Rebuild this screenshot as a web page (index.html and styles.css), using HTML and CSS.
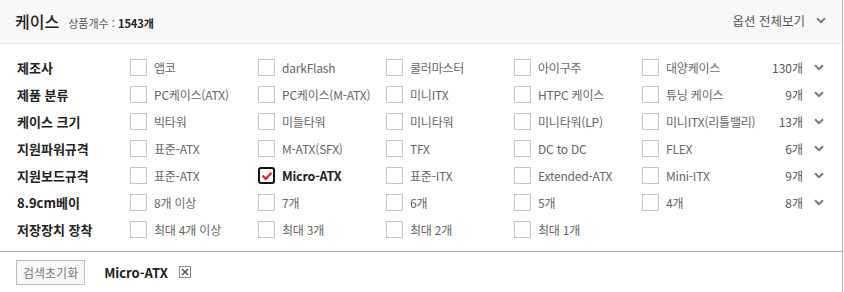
FILE: index.html
```html
<!DOCTYPE html>
<html lang="ko">
<head>
  <meta charset="UTF-8">
  <title>케이스 옵션</title>
  <link rel="stylesheet" href="styles.css">
</head>
<body>
  <div class="panel">
    <header class="panel-head">
      <div class="title">
        <h2>케이스</h2>
        <span class="total">상품개수 : <b>1543개</b></span>
      </div>
      <button class="view-all">옵션 전체보기
        <svg class="chev" width="10" height="7" viewBox="0 0 10 7"><path d="M1 1.2 L5 5.2 L9 1.2" fill="none" stroke="#777" stroke-width="2"/></svg>
      </button>
    </header>

    <div class="spec-list">
      <div class="spec-row">
        <div class="spec-name">제조사</div>
        <label class="opt"><span class="box"></span>앱코</label>
        <label class="opt"><span class="box"></span>darkFlash</label>
        <label class="opt"><span class="box"></span>쿨러마스터</label>
        <label class="opt"><span class="box"></span>아이구주</label>
        <label class="opt"><span class="box"></span>대양케이스</label>
        <div class="count">130개</div>
        <svg class="more" width="10" height="7" viewBox="0 0 10 7"><path d="M1 1.2 L5 5.2 L9 1.2" fill="none" stroke="#777" stroke-width="2"/></svg>
      </div>
      <div class="spec-row">
        <div class="spec-name">제품 분류</div>
        <label class="opt"><span class="box"></span>PC케이스(ATX)</label>
        <label class="opt"><span class="box"></span>PC케이스(M-ATX)</label>
        <label class="opt"><span class="box"></span>미니ITX</label>
        <label class="opt"><span class="box"></span>HTPC 케이스</label>
        <label class="opt"><span class="box"></span>튜닝 케이스</label>
        <div class="count">9개</div>
        <svg class="more" width="10" height="7" viewBox="0 0 10 7"><path d="M1 1.2 L5 5.2 L9 1.2" fill="none" stroke="#777" stroke-width="2"/></svg>
      </div>
      <div class="spec-row">
        <div class="spec-name">케이스 크기</div>
        <label class="opt"><span class="box"></span>빅타워</label>
        <label class="opt"><span class="box"></span>미들타워</label>
        <label class="opt"><span class="box"></span>미니타워</label>
        <label class="opt"><span class="box"></span>미니타워(LP)</label>
        <label class="opt"><span class="box"></span>미니ITX(리틀밸리)</label>
        <div class="count">13개</div>
        <svg class="more" width="10" height="7" viewBox="0 0 10 7"><path d="M1 1.2 L5 5.2 L9 1.2" fill="none" stroke="#777" stroke-width="2"/></svg>
      </div>
      <div class="spec-row">
        <div class="spec-name">지원파워규격</div>
        <label class="opt"><span class="box"></span>표준-ATX</label>
        <label class="opt"><span class="box"></span>M-ATX(SFX)</label>
        <label class="opt"><span class="box"></span>TFX</label>
        <label class="opt"><span class="box"></span>DC to DC</label>
        <label class="opt"><span class="box"></span>FLEX</label>
        <div class="count">6개</div>
        <svg class="more" width="10" height="7" viewBox="0 0 10 7"><path d="M1 1.2 L5 5.2 L9 1.2" fill="none" stroke="#777" stroke-width="2"/></svg>
      </div>
      <div class="spec-row">
        <div class="spec-name">지원보드규격</div>
        <label class="opt"><span class="box"></span>표준-ATX</label>
        <label class="opt checked"><span class="box">
          <svg width="12" height="10" viewBox="0 0 12 10"><path d="M1.5 4.5 L4.8 7.8 L10.5 1.8" fill="none" stroke="#e2282e" stroke-width="2.2"/></svg>
        </span>Micro-ATX</label>
        <label class="opt"><span class="box"></span>표준-ITX</label>
        <label class="opt"><span class="box"></span>Extended-ATX</label>
        <label class="opt"><span class="box"></span>Mini-ITX</label>
        <div class="count">9개</div>
        <svg class="more" width="10" height="7" viewBox="0 0 10 7"><path d="M1 1.2 L5 5.2 L9 1.2" fill="none" stroke="#777" stroke-width="2"/></svg>
      </div>
      <div class="spec-row">
        <div class="spec-name">8.9cm베이</div>
        <label class="opt"><span class="box"></span>8개 이상</label>
        <label class="opt"><span class="box"></span>7개</label>
        <label class="opt"><span class="box"></span>6개</label>
        <label class="opt"><span class="box"></span>5개</label>
        <label class="opt"><span class="box"></span>4개</label>
        <div class="count">8개</div>
        <svg class="more" width="10" height="7" viewBox="0 0 10 7"><path d="M1 1.2 L5 5.2 L9 1.2" fill="none" stroke="#777" stroke-width="2"/></svg>
      </div>
      <div class="spec-row">
        <div class="spec-name">저장장치 장착</div>
        <label class="opt"><span class="box"></span>최대 4개 이상</label>
        <label class="opt"><span class="box"></span>최대 3개</label>
        <label class="opt"><span class="box"></span>최대 2개</label>
        <label class="opt"><span class="box"></span>최대 1개</label>
      </div>
    </div>

    <footer class="panel-foot">
      <button class="reset">검색초기화</button>
      <span class="chosen">Micro-ATX</span>
      <button class="remove">
        <svg width="12" height="12" viewBox="0 0 12 12"><rect x="0.5" y="0.5" width="11" height="11" fill="#fff" stroke="#888"/><path d="M3 3 L9 9 M9 3 L3 9" stroke="#444" stroke-width="1.3"/></svg>
      </button>
    </footer>
  </div>
</body>
</html>
```

FILE: styles.css
```css
* { box-sizing: border-box; }
body {
  margin: 0;
  font-family: "Noto Sans CJK KR", "Noto Sans", sans-serif;
  background: #fff;
  color: #222;
}
.panel {
  width: 843px;
  height: 292px;
  border-right: 1px solid #b5b5b5;
}
.panel-head {
  height: 44px;
  background: #f8f8f8;
  border-bottom: 1px solid #e0e0e0;
  display: flex;
  align-items: center;
  justify-content: space-between;
  padding: 0 16px 2px 15px;
}
.title {
  display: flex;
  align-items: baseline;
  gap: 9px;
}
.title h2 {
  margin: 0;
  font-size: 16px;
  font-weight: 500;
  color: #222;
  line-height: 20px;
}
.total {
  font-size: 11px;
  color: #555;
}
.total b { color: #222; font-weight: 700; }
.view-all {
  background: none;
  border: none;
  padding: 0;
  font: inherit;
  font-size: 12.5px;
  color: #555;
  display: flex;
  align-items: center;
  gap: 11px;
  cursor: pointer;
}
.spec-list {
  padding: 10px 0 8px;
}
.spec-row {
  display: grid;
  grid-template-columns: 130px repeat(5, 128px) 33px 10px;
  align-items: center;
  height: 27px;
  column-gap: 0;
}
.spec-name {
  padding-left: 17px;
  font-size: 13px;
  font-weight: 700;
  color: #222;
}
.opt {
  display: flex;
  align-items: center;
  gap: 7px;
  font-size: 12px;
  color: #666;
  white-space: nowrap;
  letter-spacing: -0.2px;
}
.box {
  width: 17px;
  height: 17px;
  border: 1px solid #c4c4c4;
  background: #fff;
  flex: none;
  display: flex;
  align-items: center;
  justify-content: center;
}
.opt.checked { color: #222; font-weight: 700; font-size: 12.5px; }
.opt.checked .box {
  border: 2px solid #111;
  border-radius: 3px;
}
.count {
  text-align: right;
  font-size: 12px;
  color: #555;
  white-space: nowrap;
}
.more { margin-left: 11px; }
.panel-foot {
  border-top: 1px solid #aaa;
  height: 41px;
  display: flex;
  align-items: center;
  padding: 0 16px;
}
.reset {
  height: 25px;
  padding: 0 6px;
  border: 1px solid #bbb;
  background: #f8f8f8;
  font: inherit;
  font-size: 12px;
  color: #777;
  margin-right: 19px;
}
.chosen {
  font-size: 13px;
  font-weight: 700;
  color: #222;
  margin-right: 11px;
}
.remove {
  border: none;
  background: none;
  padding: 0;
  display: flex;
}
```
